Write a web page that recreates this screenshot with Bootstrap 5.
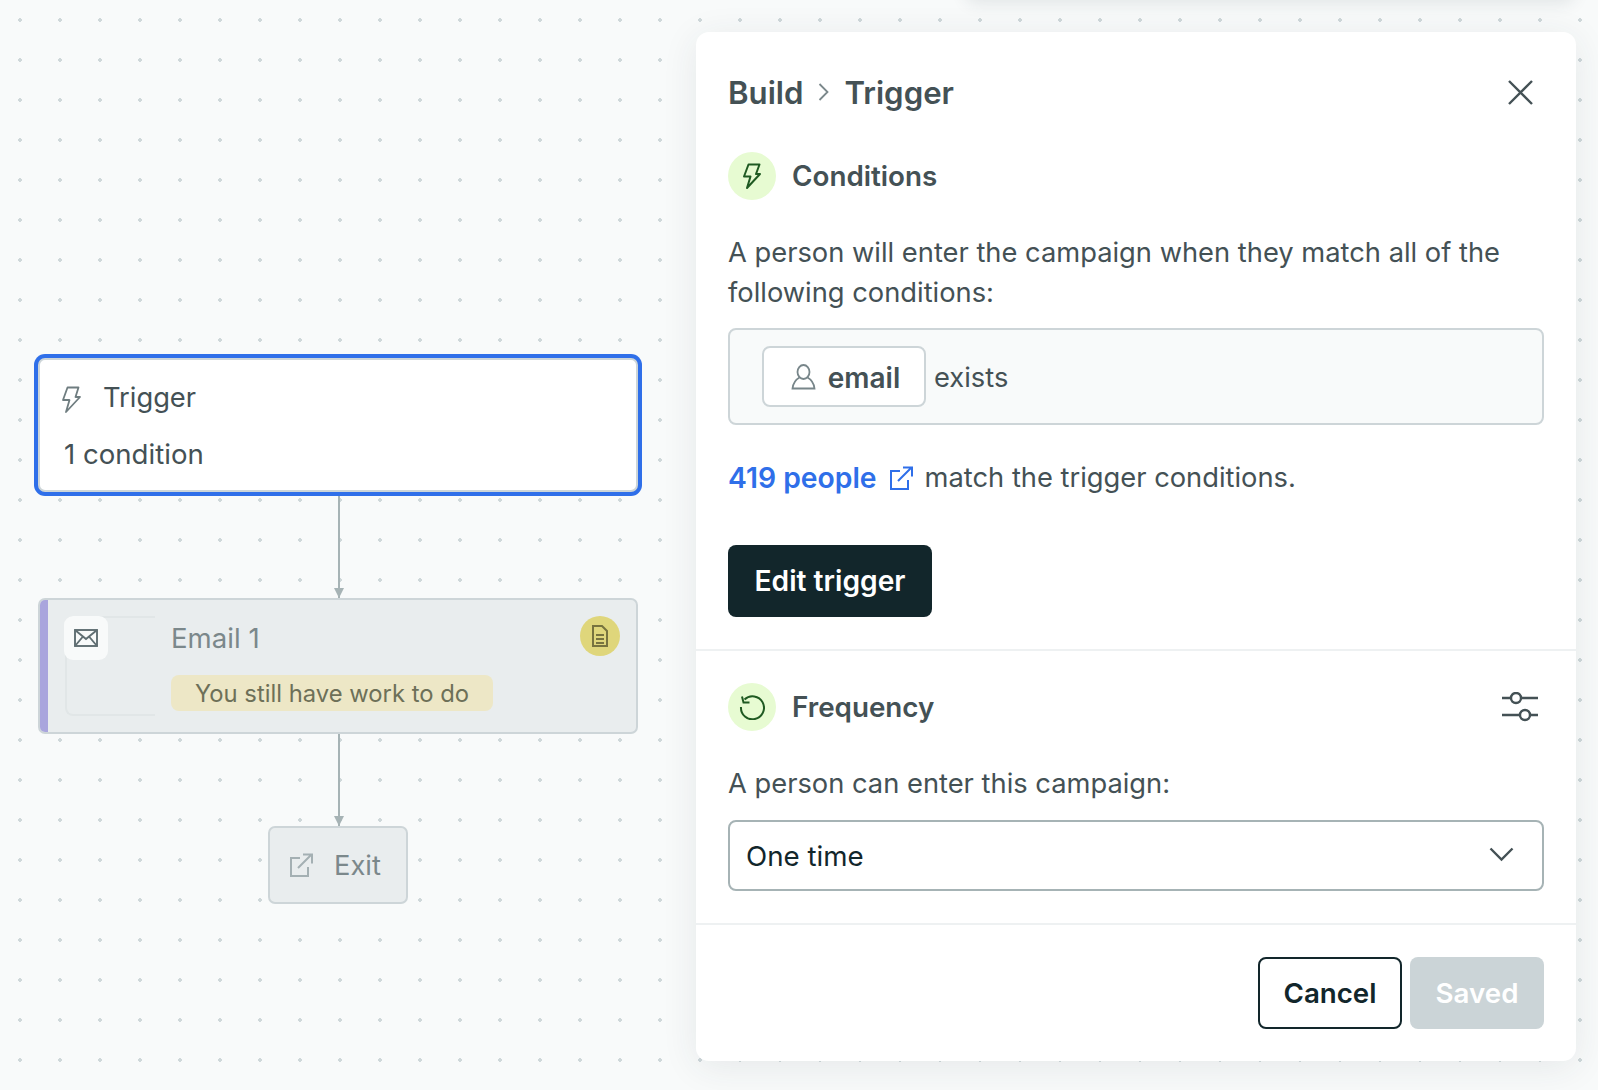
<!DOCTYPE html>
<html lang="en"><head><meta charset="utf-8"><title>Trigger</title>
<link href="https://cdn.jsdelivr.net/npm/bootstrap@5.3.0/dist/css/bootstrap.min.css" rel="stylesheet">
<style>
html,body{height:100%;margin:0;overflow:hidden}
body{font-family:Inter,"Liberation Sans",sans-serif;font-size:27.3px;line-height:40px;color:#445155;background:#f8fafa}
.canvas-area{position:relative;width:1598px;height:1090px;overflow:hidden;background-image:radial-gradient(circle at center,#cfd8da 1.6px,transparent 2px);background-size:40px 40px}
.node{position:absolute;border:2px solid #cdd5d8;border-radius:7px;background:#e9edee}
.node-trigger{left:38px;top:358px;width:600px;height:134px;background:#fff;box-shadow:0 0 0 4px #2f6fe9;color:#445155}
.node-trigger .t1{position:absolute;left:63px;top:18px}
.node-trigger .t2{position:absolute;left:24px;top:74px;font-size:27.6px}
.node-trigger svg{position:absolute;left:21px;top:26px}
.node-email{left:38px;top:598px;width:600px;height:136px;color:#7b888b;overflow:hidden}
.purple{position:absolute;left:0;top:0;bottom:0;width:8px;background:#a9a5dd}
.ghost{position:absolute;left:25px;top:16px;width:90px;height:100px;border:2px solid #e1e6e7;border-right:0;border-radius:8px 0 0 8px}
.mail-tile{position:absolute;left:24px;top:16px;width:44px;height:44px;border-radius:9px;background:#f8fafa}
.email-name{position:absolute;left:131px;top:18px;font-size:27.6px}
.work-pill{position:absolute;left:131px;top:75px;height:36px;width:322px;border-radius:8px;background:#ede7c6;color:#6d7058;font-size:23.8px;line-height:38px}
.doc-dot{position:absolute;left:540px;top:16px;width:40px;height:40px;border-radius:50%;background:#dfd67b}
.node-exit{left:268px;top:826px;width:140px;height:78px;color:#7b888b;padding-left:19px;gap:21px}
.node-exit span{margin-top:2px}
.wire{position:absolute;left:338px;width:2px;background:#a6b3b5}
.wire::after{content:"";position:absolute;left:-4px;bottom:0;border-left:5px solid transparent;border-right:5px solid transparent;border-top:10px solid #a6b3b5}
.side-panel{position:absolute;left:696px;top:32px;width:880px;height:1029px;background:#fff;border-radius:13px;box-shadow:0 6px 36px rgba(40,60,70,.09)}
.top-sliver{position:absolute;left:965px;top:-30px;width:610px;height:30px;border-radius:12px;box-shadow:0 4px 16px rgba(40,60,70,.1)}
.pane-top{padding:40px 32px 0;height:617px}
.pane-mid{padding:32px 32px 0;height:276px;border-top:2px solid #eef1f2;border-bottom:2px solid #eef1f2}
.pane-end{padding:32px 32px 0}
.crumb{font-size:31.2px;font-weight:600;height:40px}
.crumb span{margin-top:2px}
.crumb-sep{margin:0 15px}
.crumb-x{margin-right:10px}
.glyph-disc{width:48px;height:48px;border-radius:50%;background:#e7fbd2}
.sec-title{font-size:27.8px;font-weight:600;line-height:42px}
.para-top{margin:33px 0 15px}
.para-mid{margin:33px 0 16px}
.cond-box{height:97px;border:2px solid #cdd5d8;border-radius:8px;background:#f8fafa;padding-left:32px}
.cond-box>span{margin-top:3px}
.cond-chip{width:164px;height:61px;border:2px solid #cdd5d8;border-radius:8px;background:#fff;font-weight:600;font-size:28px;color:#445155;gap:12px;padding-left:3px}
.cond-chip span{margin-top:3px}
.people-row{margin-top:33px}
.blue-link{color:#2f6fe9;font-weight:600;font-size:28.3px;text-decoration:none}
.ext-gap{margin:0 12px}
.btn-ink{width:204px;height:72px;margin-top:47px;background:#12262b;color:#fff;border-radius:8px;font-size:28.2px;font-weight:600;padding:0;border:0}
.btn-ink:hover{background:#12262b;color:#fff}
.freq-select{height:71px;border:2px solid #a6b3b5;border-radius:8px;padding:0 28px 0 16px;color:#12262b;font-size:27.7px}
.freq-select span{margin-top:1px}
.freq-select svg{margin-bottom:3px}
.slider-ic{margin-right:6px}
.btn-line{width:144px;height:72px;border:2px solid #12262b;border-radius:8px;background:#fff;color:#12262b;font-size:27.7px;font-weight:600;padding:2px 0 0}
.btn-off,.btn-off:disabled{width:134px;height:72px;border:0;border-radius:8px;background:#cbd4d7;color:#fff;font-size:27.7px;font-weight:600;padding:2px 0 0;opacity:1}
</style></head>
<body>
<div class="canvas-area">
  <div class="wire" style="top:496px;height:102px"></div>
  <div class="wire" style="top:734px;height:92px"></div>

  <div class="node node-trigger">
    <svg width="20" height="28" viewBox="0 0 20 28" fill="none" stroke="#6f7d80" stroke-width="1.8" stroke-linejoin="round"><path d="M6.500 1.500h11l-3 9.500h4.500L5 26l3.500-12H2z"/></svg>
    <div class="t1">Trigger</div>
    <div class="t2">1 condition</div>
  </div>

  <div class="node node-email">
    <div class="purple"></div>
    <div class="ghost"></div>
    <div class="mail-tile d-flex align-items-center justify-content-center">
      <svg width="24" height="18" viewBox="0 0 24 18" fill="none" stroke="#5f6e72" stroke-width="1.9"><rect x="1" y="1" width="22" height="16"/><path d="M1 1l11 9L23 1M1 17l8-9.500M23 17l-8-9.500"/></svg>
    </div>
    <div class="email-name">Email 1</div>
    <div class="work-pill text-center">You still have work to do</div>
    <div class="doc-dot d-flex align-items-center justify-content-center">
      <svg width="16" height="22" viewBox="0 0 16 22" fill="none" stroke="#77733f" stroke-width="2"><path d="M1 1h9l5 5v15H1zM4 10h8M4 14h8M4 18h8"/></svg>
    </div>
  </div>

  <div class="node node-exit d-flex align-items-center">
    <svg width="24" height="24" viewBox="0 0 24 24" fill="none" stroke="#a4b0b3" stroke-width="2"><path d="M11 5H2v18h17v-9M9 15L22 2M14 1.500h9v9"/></svg>
    <span>Exit</span>
  </div>

  <div class="top-sliver"></div>

  <div class="side-panel">
    <div class="pane-top">
      <div class="d-flex align-items-center justify-content-between crumb">
        <div class="d-flex align-items-center">
          <span>Build</span>
          <svg class="crumb-sep" width="11" height="20" viewBox="0 0 11 20" fill="none" stroke="#7b888b" stroke-width="1.8"><path d="M1.500 2l8 8-8 8"/></svg>
          <span>Trigger</span>
        </div>
        <svg class="crumb-x" width="27" height="27" viewBox="0 0 27 27" fill="none" stroke="#445155" stroke-width="2.400"><path d="M2 2l23 23M25 2L2 25"/></svg>
      </div>
      <div class="d-flex align-items-center gap-3 mt-4 pt-3">
        <div class="glyph-disc d-flex align-items-center justify-content-center">
          <svg width="18" height="27" viewBox="0 0 18 27" fill="none" stroke="#1f5a22" stroke-width="2" stroke-linejoin="round"><path d="M5.500 1.500h11l-3.500 9.500h4L4 25l3.500-11.500H1z"/></svg>
        </div>
        <span class="sec-title">Conditions</span>
      </div>
      <p class="para-top">A person will enter the campaign when they match all of the following conditions:</p>
      <div class="cond-box d-flex align-items-center gap-2">
        <div class="cond-chip d-flex align-items-center justify-content-center">
          <svg width="25" height="26" viewBox="0 0 25 26" fill="none" stroke="#78868a" stroke-width="1.800"><ellipse cx="12.500" cy="8" rx="6" ry="7"/><path d="M8.500 13.500C4 16 2 20 1.500 24.500h22C23 20 21 16 16.500 13.500"/></svg>
          <span>email</span>
        </div>
        <span>exists</span>
      </div>
      <div class="people-row d-flex align-items-center">
        <a class="blue-link" href="#">419 people</a>
        <svg class="ext-gap" width="24" height="24" viewBox="0 0 24 24" fill="none" stroke="#2f6fe9" stroke-width="2"><path d="M11 5H2v18h17v-9M9 15L22 2M14 1.500h9v9"/></svg>
        <span>match the trigger conditions.</span>
      </div>
      <button class="btn btn-ink d-block" type="button">Edit trigger</button>
    </div>
    <div class="pane-mid">
      <div class="d-flex align-items-center gap-3">
        <div class="glyph-disc d-flex align-items-center justify-content-center">
          <svg width="26" height="26" viewBox="0 0 26 26" fill="none" stroke="#1f5a22" stroke-width="2"><path d="M5.500 5.500A11.500 11.500 0 1 1 2 13M3 2.500l1.500 6h6"/></svg>
        </div>
        <span class="sec-title flex-grow-1">Frequency</span>
        <svg class="slider-ic" width="36" height="31" viewBox="0 0 36 31" fill="none" stroke="#445155" stroke-width="2.400"><circle cx="14" cy="6" r="5"/><circle cx="23" cy="23" r="5"/><path d="M19 6h17M0 6h9M0 23h18M28 23h8"/></svg>
      </div>
      <p class="para-mid">A person can enter this campaign:</p>
      <div class="freq-select d-flex align-items-center justify-content-between">
        <span>One time</span>
        <svg width="25" height="15" viewBox="0 0 25 15" fill="none" stroke="#445155" stroke-width="2.400"><path d="M1.500 1.500l11 11 11-11"/></svg>
      </div>
    </div>
    <div class="pane-end d-flex justify-content-end gap-2">
      <button class="btn btn-line" type="button">Cancel</button>
      <button class="btn btn-off" type="button" disabled>Saved</button>
    </div>
  </div>
</div>
<script src="https://cdn.jsdelivr.net/npm/bootstrap@5.3.0/dist/js/bootstrap.bundle.min.js"></script>
</body></html>
